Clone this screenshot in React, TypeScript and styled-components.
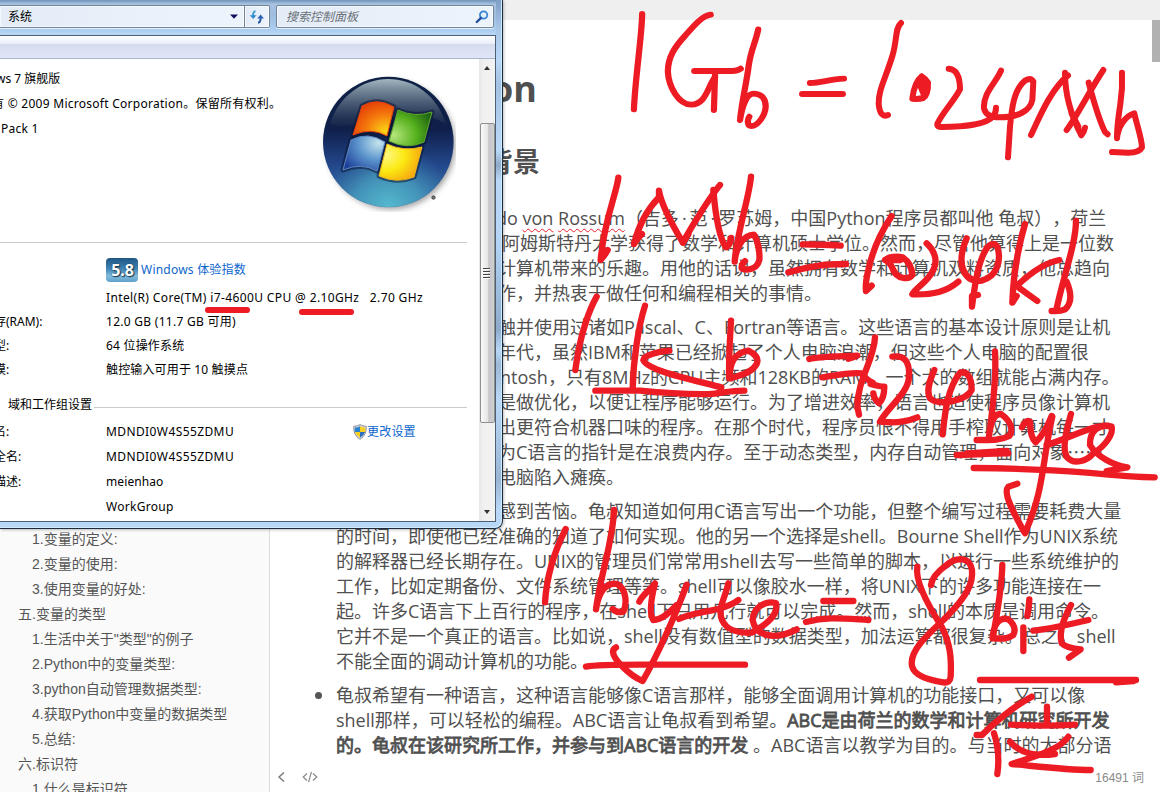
import React from "react";
import styled, { createGlobalStyle, css } from "styled-components";

const Global = createGlobalStyle`
  * { box-sizing: border-box; }
  html, body { margin: 0; padding: 0; overflow: hidden; background: #fff; }
`;

const Screen = styled.div`
  position: relative;
  display: flex;
  flex-direction: column;
  width: 1160px;
  height: 792px;
  overflow: hidden;
  background: #fff;
`;

/* ---------- editor ---------- */

const TopBar = styled.div`
  flex: 0 0 20px;
  background: #efefef;
`;

const Body = styled.div`
  flex: 1;
  min-height: 0;
  display: flex;
`;

const Sidebar = styled.aside`
  width: 270px;
  padding-top: 507px;
  overflow: hidden;
  background: #fafafa;
  border-right: 1px solid #dddddd;
  font: 14px/25px "Liberation Sans", "Noto Sans CJK SC", sans-serif;
  color: #555;
`;

const OutlineItem = styled.div<{ $level: number }>`
  height: 25px;
  padding-left: ${(p) => (p.$level === 1 ? 18 : 32)}px;
  white-space: nowrap;
`;

const Main = styled.main`
  flex: 1;
  min-width: 0;
  display: flex;
  flex-direction: column;
`;

const Document = styled.div`
  display: flex;
  height: 742px;
  overflow: hidden;
`;

const Article = styled.article`
  flex: 1;
  color: #505050;
  font: 18px/25px "Open Sans", "Noto Sans CJK SC", sans-serif;
  text-spacing-trim: space-all;
`;

const ScrollThumb = styled.div`
  width: 8px;
  height: 42px;
  background: #b1b1b1;
`;

const H1 = styled.h1`
  margin: 44px 0 0 221px;
  font-size: 36px;
  line-height: 50px;
  font-weight: 700;
`;

const H2 = styled.h2`
  margin: 30px 0 0 216px;
  font-size: 27px;
  line-height: 36px;
  font-weight: 700;
`;

const Para = styled.div<{ $gap: number }>`
  margin-top: ${(p) => p.$gap}px;
  padding-left: 66px;
  position: relative;
`;

const Line = styled.div<{ $shift?: number }>`
  height: 25px;
  margin-left: ${(p) => p.$shift ?? 0}px;
  white-space: nowrap;
`;

const Misspelt = styled.span`
  text-decoration: underline wavy #e8222c 1px;
  text-underline-offset: 3px;
`;

const NameDot = styled.span`
  padding: 0 3px;
`;

const Ellipsis = styled.span`
  font-family: "Noto Sans CJK SC", sans-serif;
  line-height: 1;
`;

const Strong = styled.strong`
  font-weight: 400;
  -webkit-text-stroke: 0.8px currentColor;
`;

const Bullet = styled.span`
  position: absolute;
  left: 45px;
  top: 9px;
  width: 7px;
  height: 7px;
  border-radius: 50%;
  background: #555;
`;

const Footer = styled.footer`
  flex: 1;
  display: flex;
  align-items: center;
  gap: 16px;
  padding: 0 16px 1px 7px;
  font: 12px "Liberation Sans", "Noto Sans CJK SC", sans-serif;
  color: #8a8a8a;
`;

const WordCount = styled.span`
  margin-left: auto;
`;

/* ---------- system window ---------- */

const Window = styled.section`
  position: absolute;
  left: 0;
  top: 0;
  width: 503px;
  height: 529px;
  display: flex;
  flex-direction: column;
  padding: 0 6px 6px 0;
  border: solid #1c2b3d;
  border-width: 0 1px 1px 0;
  border-radius: 0 0 8px 0;
  background: linear-gradient(180deg, #7f9fc3 0, #a9c8ea 30px, #b9d8f8 60px, #a3c2e4 85px, #bbd9f8 150px, #8fabc9 165px, #b9d8f8 180px, #b5d5f7 240px, #8eabcc 330px, #b9d8f8 350px, #9db9d6 365px, #b9d8f8 400px, #9ab6d4 480px, #b9d8f8 510px);
  box-shadow: inset -1px -1px 0 #cfeafd, 1px 1px 3px rgba(0, 0, 0, 0.25);
  font: 12px/16px "Noto Sans", "Noto Sans CJK SC", sans-serif;
  color: #000;
`;

const AddressRow = styled.div`
  flex: 0 0 35px;
  display: flex;
  align-items: flex-start;
  padding-top: 5px;
  background: linear-gradient(180deg, #6f93b8 0, #a7c3e0 4px, #9fbddd 14px, #abcdf1 30px, #b8d6f4 34px);
`;

const fieldLook = css`
  height: 23px;
  border: 1px solid #73859a;
  background: linear-gradient(90deg, #e3ecf7, #edf4fc);
  box-shadow: 0 1px 0 #e4f0fb, inset 0 0 0 1px rgba(255, 255, 255, 0.6);
`;

const Address = styled.div`
  ${fieldLook}
  width: 245px;
  border-left: 0;
  display: flex;
  align-items: center;
  justify-content: space-between;
  padding: 0 6px 0 8px;
`;

const Refresh = styled.div`
  ${fieldLook}
  width: 25px;
  border-left: 0;
  border-radius: 0 2px 2px 0;
  display: flex;
  align-items: center;
  justify-content: center;
`;

const Search = styled.div`
  ${fieldLook}
  width: 218px;
  margin-left: 6px;
  border-radius: 2px;
  display: flex;
  align-items: center;
  justify-content: space-between;
  padding: 0 4px 0 9px;
  font-style: italic;
  color: #6a6f76;
`;

const Client = styled.div`
  flex: 1;
  min-height: 0;
  display: flex;
  flex-direction: column;
  border: solid #4f5f73;
  border-width: 1px 1px 1px 0;
  background: #fff;
`;

const CommandBar = styled.div`
  flex: 0 0 23px;
  border-bottom: 1px solid #aab4cc;
  background: linear-gradient(180deg, #fdfeff 0, #e8eef8 8px, #d5dcee 8px, #e0e6f6 22px);
`;

const Pane = styled.div`
  flex: 1;
  min-height: 0;
  display: flex;
`;

const Details = styled.div`
  width: 479px;
  padding-top: 7px;
  overflow: hidden;
`;

const Edition = styled.div`
  display: flex;
  height: 176px;
`;

const EditionText = styled.div`
  width: 314px;
  line-height: 25px;
  white-space: nowrap;
`;

const EditionLine = styled.div<{ $x: number; $spacing?: number }>`
  height: 25px;
  margin-left: ${(p) => p.$x}px;
  letter-spacing: ${(p) => p.$spacing ?? 0}px;
`;

const Rule = styled.div<{ $drop?: number }>`
  flex: 1;
  height: 1px;
  margin: ${(p) => p.$drop ?? 0}px 12px 0 0;
  background: #cbcbcb;
`;

const Row = styled.div<{ $h: number; $gap?: number }>`
  display: flex;
  align-items: center;
  height: ${(p) => p.$h}px;
  margin-top: ${(p) => p.$gap ?? 0}px;
  white-space: pre;
`;

const Label = styled.div`
  width: 112px;
  margin-left: -6px;
`;

const Value = styled.div<{ $spacing?: number; $w?: number }>`
  width: ${(p) => (p.$w ? `${p.$w}px` : "auto")};
  letter-spacing: ${(p) => p.$spacing ?? 0}px;
`;

const Link = styled.span<{ $spacing?: number }>`
  display: inline-flex;
  align-items: center;
  letter-spacing: ${(p) => p.$spacing ?? 0}px;
  color: #0d66cc;
`;

const Score = styled.span`
  width: 32px;
  height: 24px;
  margin-right: 3px;
  border-radius: 4px;
  background: linear-gradient(180deg, #1e5683 0, #3f84b6 45%, #86bddd 75%, #5ba0cb 100%);
  color: #fff;
  font: bold 16px/25px "Noto Sans", sans-serif;
  letter-spacing: 0;
  text-align: right;
  padding-right: 4px;
  text-shadow: 1px 1px 1px #16384f, 0 0 2px #16384f;
`;

const GroupTitle = styled.div`
  margin: 0 2px 0 8px;
`;

const ScrollBar = styled.div`
  flex: 1;
  display: flex;
  flex-direction: column;
  align-items: center;
  background: linear-gradient(90deg, #e6e6e6, #f0f0f0 4px, #f2f2f2);
`;

const Arrow = styled.div<{ $down?: boolean }>`
  width: 0;
  height: 0;
  margin: ${(p) => (p.$down ? "auto 0 7px" : "7px 0 0")};
  border: 3.5px solid transparent;
  ${(p) => (p.$down ? "border-top: 4px solid #333; border-bottom: 0;" : "border-bottom: 4px solid #333; border-top: 0;")}
`;

const Thumb = styled.div`
  width: 15px;
  height: 300px;
  margin-top: 53px;
  display: flex;
  flex-direction: column;
  align-items: center;
  justify-content: center;
  gap: 2px;
  border: 1px solid #8f8f8f;
  border-radius: 2px;
  background: linear-gradient(90deg, #fafafa, #e6e6e8 50%, #c6c6ca 60%, #cfcfd2);
`;

const Grip = styled.i`
  width: 7px;
  height: 1px;
  margin-right: 1px;
  background: #444;
  box-shadow: 0 1px 0 #fff;
`;

const Ink = styled.svg`
  position: absolute;
  left: 0;
  top: 0;
  pointer-events: none;
  fill: none;
  stroke: #ed1c24;
  stroke-linecap: round;
  stroke-linejoin: round;
`;

const outline: [number, string][] = [
  [2, "1.变量的定义:"],
  [2, "2.变量的使用:"],
  [2, "3.使用变量的好处:"],
  [1, "五.变量的类型"],
  [2, "1.生活中关于\"类型\"的例子"],
  [2, "2.Python中的变量类型:"],
  [2, "3.python自动管理数据类型:"],
  [2, "4.获取Python中变量的数据类型"],
  [2, "5.总结:"],
  [1, "六.标识符"],
  [2, "1.什么是标识符"],
];

const languages = [
  "触并使用过诸如Pascal、C、Fortran等语言。这些语言的基本设计原则是让机",
  "年代，虽然IBM和苹果已经掀起了个人电脑浪潮，但这些个人电脑的配置很",
  "ntosh，只有8MHz的CPU主频和128KB的RAM，一个大的数组就能占满内存。",
  "是做优化，以便让程序能够运行。为了增进效率，语言也迫使程序员像计算机",
  "出更符合机器口味的程序。在那个时代，程序员恨不得用手榨取计算机每一寸",
];

const shellLines = [
  "的时间，即使他已经准确的知道了如何实现。他的另一个选择是shell。Bourne Shell作为UNIX系统",
  "的解释器已经长期存在。UNIX的管理员们常常用shell去写一些简单的脚本，以进行一些系统维护的",
  "工作，比如定期备份、文件系统管理等等。shell可以像胶水一样，将UNIX下的许多功能连接在一",
  "起。许多C语言下上百行的程序，在shell下只用几行就可以完成。然而，shell的本质是调用命令。",
  "它并不是一个真正的语言。比如说，shell没有数值型的数据类型，加法运算都很复杂。总之，shell",
  "不能全面的调动计算机的功能。",
];

const WindowsLogo = () => (
  <svg width="142" height="146" viewBox="0 0 142 146">
    <defs>
      <linearGradient id="orb" x1="0" y1="0" x2="0" y2="1">
        <stop offset="0" stopColor="#0e2245" />
        <stop offset="0.4" stopColor="#0f1f4a" />
        <stop offset="0.68" stopColor="#23478c" />
        <stop offset="1" stopColor="#3d7fae" />
      </linearGradient>
      <radialGradient id="glow" cx="0.5" cy="1" r="0.5">
        <stop offset="0" stopColor="#55b9cf" />
        <stop offset="0.5" stopColor="#4aa5c2" stopOpacity="0.7" />
        <stop offset="1" stopColor="#3a7fb0" stopOpacity="0" />
      </radialGradient>
      <linearGradient id="gloss" x1="0" y1="0" x2="0" y2="1">
        <stop offset="0" stopColor="#a3b6bf" />
        <stop offset="1" stopColor="#1a2c4c" stopOpacity="0.5" />
      </linearGradient>
      <radialGradient id="red" cx="0.8" cy="0.85" r="0.95">
        <stop offset="0" stopColor="#fbd616" />
        <stop offset="0.5" stopColor="#f57a0c" />
        <stop offset="1" stopColor="#e33a06" />
      </radialGradient>
      <radialGradient id="green" cx="0.1" cy="0.7" r="1">
        <stop offset="0" stopColor="#b6e67b" />
        <stop offset="0.55" stopColor="#55b01d" />
        <stop offset="1" stopColor="#1d6112" />
      </radialGradient>
      <radialGradient id="blue" cx="0.85" cy="0.2" r="1">
        <stop offset="0" stopColor="#c4e4ec" />
        <stop offset="0.5" stopColor="#5b94cc" />
        <stop offset="1" stopColor="#1c3f98" />
      </radialGradient>
      <radialGradient id="yellow" cx="0.15" cy="0.3" r="1">
        <stop offset="0" stopColor="#fdf884" />
        <stop offset="0.45" stopColor="#fbe912" />
        <stop offset="1" stopColor="#f5900e" />
      </radialGradient>
      <filter id="soft" x="-20%" y="-20%" width="140%" height="140%">
        <feGaussianBlur stdDeviation="3" />
      </filter>
    </defs>
    <circle cx="77" cy="79" r="64" fill="#000" opacity="0.4" filter="url(#soft)" />
    <circle cx="74.3" cy="76" r="65.3" fill="url(#orb)" />
    <circle cx="74.3" cy="76" r="65" fill="url(#glow)" />
    <path d="M16 58 C25 29 50 13 74 13 C100 13 123 29 132 58 C112 46 95 50 74 52 C55 54 36 64 16 58Z" fill="url(#gloss)" />
    <g stroke="#0a1634" strokeOpacity="0.55" strokeWidth="5" strokeLinejoin="round">
      <path d="M48 40 Q63 31 80 41 L73 70 Q57 61 39 69Z" />
      <path d="M84 44 Q101 52 118 46 L110 76 Q93 84 75 75Z" />
      <path d="M37 74 Q54 65 71 76 L63 105 Q47 96 29 104Z" />
      <path d="M73 78 Q90 86 108 81 L100 111 Q83 118 65 110Z" />
    </g>
    <path d="M48 40 Q63 31 80 41 L73 70 Q57 61 39 69Z" fill="url(#red)" stroke="#e8420b" />
    <path d="M84 44 Q101 52 118 46 L110 76 Q93 84 75 75Z" fill="url(#green)" stroke="#5fa92f" />
    <path d="M37 74 Q54 65 71 76 L63 105 Q47 96 29 104Z" fill="url(#blue)" stroke="#5f86c5" />
    <path d="M73 78 Q90 86 108 81 L100 111 Q83 118 65 110Z" fill="url(#yellow)" stroke="#f0b81c" />
    <circle cx="119.5" cy="131.5" r="1.7" fill="#777" stroke="#333" strokeWidth="0.8" />
  </svg>
);

const RefreshIcon = () => (
  <svg width="16" height="14" viewBox="0 0 16 14">
    <path d="M6.5 1.2 Q4 1.5 4 6" fill="none" stroke="#3f9bd6" strokeWidth="2" />
    <path d="M0.8 5.2 H7.6 L4.2 9Z" fill="#2f86c8" />
    <path d="M9 12.8 Q11.6 12.5 11.6 8" fill="none" stroke="#2757a8" strokeWidth="2" />
    <path d="M8.2 8.4 H15 L11.6 4.6Z" fill="#2f62b4" />
  </svg>
);

const SearchIcon = () => (
  <svg width="14" height="14" viewBox="0 0 14 14" fill="none">
    <circle cx="8.6" cy="5" r="3.7" stroke="#3b86d2" strokeWidth="1.8" fill="#e2f1fc" />
    <path d="M6 7.8 L1.8 12" stroke="#264f9e" strokeWidth="2.4" strokeLinecap="round" />
  </svg>
);

const Shield = () => (
  <svg width="14" height="16" viewBox="0 0 14 16">
    <path d="M7 .6 Q10 2.4 13.2 2.2 Q14 11 7 15.4 Q0 11 .8 2.2 Q4 2.4 7 .6Z" fill="#d9dde0" stroke="#84898d" strokeWidth="0.9" />
    <path d="M7 2.2 V8 H1.9 Q1.6 5.5 1.9 3.6 Q4.8 3.6 7 2.2Z" fill="#2b83cf" />
    <path d="M7 2.2 V8 H12.1 Q12.4 5.5 12.1 3.6 Q9.2 3.6 7 2.2Z" fill="#f6cf20" />
    <path d="M7 8 V13.8 Q3 11.2 1.9 8Z" fill="#f6cf20" />
    <path d="M7 8 V13.8 Q11 11.2 12.1 8Z" fill="#2b6fc0" />
  </svg>
);

/* Each pen group keeps the coordinate scale it was digitised at. */
const pen: { at: string; width: number; strokes: string[] }[] = [
  {
    at: "translate(600 0) scale(0.35714 0.33333)",
    width: 17.5,
    strokes: [
      "M118 42 C118 100 98 240 95 328",
      "M310 44 C285 48 262 78 240 105 C210 140 190 170 190 215 C192 260 220 313 255 314 C298 312 300 262 322 232",
      "M264 213 H370 Q385 213 394 206",
      "M322 225 L319 330",
      "M443 88 C435 130 422 150 416 200 C410 250 398 300 392 360 C398 320 410 281 430 281 C452 281 464 296 464 320 C462 350 440 378 424 378 C412 378 412 360 418 350",
      "M588 249 C620 249 640 238 683 236",
      "M566 282 H680",
    ],
  },
  {
    at: "translate(860 10) scale(0.33333)",
    width: 18,
    strokes: [
      "M123 39 C105 55 112 85 98 135 C75 210 55 240 56 282 Q60 325 84 315",
      "M185 199 C165 215 160 240 157 266 Q175 268 190 264 Q205 255 204 218 Q195 205 185 199 L180 225 L190 250 M192 215 V245",
      "M266 176 C292 178 300 205 300 238 C285 270 245 310 232 342 Q230 351 245 351 C310 350 380 345 400 318 Q408 308 408 293",
      "M423 182 C410 215 368 250 372 295 Q378 322 420 322 C470 322 510 305 517 270 L520 215 Q512 202 495 212 C460 240 455 300 450 350 L444 442",
      "M513 375 C535 330 570 240 624 196",
      "M615 188 C615 250 635 320 664 376 Q673 366 675 353",
      "M620 360 C650 320 690 240 730 180",
      "M686 218 C700 270 715 325 735 366 L743 373",
      "M635 310 L655 350",
      "M786 188 C789 250 782 270 777 310 C772 345 771 365 771 385 C774 350 795 318 823 310 C832 350 845 385 846 412 Q838 428 805 428 L756 426",
    ],
  },
  {
    at: "translate(480 160) scale(0.33333)",
    width: 19,
    strokes: [
      "M415 53 C410 100 372 180 362 300 Q375 285 383 270",
      "M486 222 Q476 230 462 252 C475 200 500 150 537 112 L537 92 C545 140 580 200 609 248 C625 215 690 110 720 75",
      "M609 248 L625 222",
      "M700 90 C705 150 715 230 738 262 Q750 258 753 234",
      "M813 50 C808 110 768 230 764 305 C768 260 790 225 822 224 C835 245 840 280 838 300 C830 330 800 332 785 325 Q785 310 795 303",
      "M350 410 C330 445 300 520 286 630",
      "M495 437 C475 500 460 600 458 685",
      "M568 572 C540 574 490 585 490 600 C500 630 620 655 724 682",
      "M346 692 H480 C560 700 630 703 690 702 C720 700 750 692 793 692",
      "M753 482 C750 540 745 600 748 655 C750 610 760 580 805 572 Q840 590 830 612 C815 640 780 645 752 655",
    ],
  },
  {
    at: "translate(800 160) scale(0.33333)",
    width: 19,
    strokes: [
      "M8 253 C50 254 90 254 122 257",
      "M-35 337 C20 322 60 312 138 312",
      "M275 168 C250 205 220 260 205 330 Q195 370 198 393 L215 377",
      "M255 300 C265 290 290 288 308 292 Q335 310 337 345 C325 362 290 355 280 330 Q270 305 255 300 L300 300",
      "M380 250 C402 270 415 300 400 330 C380 370 350 380 337 403 C400 405 440 395 475 365",
      "M500 235 C485 270 478 300 490 330 C500 355 520 365 545 362 C592 350 605 300 592 260 Q580 242 562 262 C535 300 525 370 516 440 V408 L534 405",
      "M675 192 C655 260 640 340 637 428 L650 408",
      "M778 300 C735 308 690 340 650 378 Q680 400 712 423",
      "M828 182 C828 250 790 350 770 445 M800 365 C815 400 815 430 795 448 Q780 455 755 453",
      "M28 597 C50 590 90 590 172 587 L145 596",
      "M66 652 C110 645 150 636 185 640 Q200 660 218 668",
      "M225 532 C222 600 172 660 172 740 L177 764",
      "M212 672 Q240 680 253 680 C253 710 245 722 237 730 Q222 718 220 700",
      "M277 590 C310 585 330 600 327 650 C325 700 265 740 240 785 C280 790 320 785 352 772",
      "M403 630 C385 670 380 695 390 715 C420 740 500 720 515 690 C515 650 500 632 480 638 C440 690 435 760 428 823",
    ],
  },
  {
    at: "translate(480 390) scale(0.33333)",
    width: 19,
    strokes: [
      "M257 417 C225 480 200 560 195 637",
      "M402 360 C400 450 360 560 348 658 C355 610 375 575 412 582 C442 600 440 645 430 665 Q410 670 398 657",
      "M478 635 C490 610 510 602 525 580 C515 620 505 670 520 690 C550 690 575 660 590 645 M620 584 C585 680 530 800 488 873 C455 860 372 790 408 772",
      "M597 687 C650 662 730 665 775 630",
      "M745 580 C735 625 712 655 726 690 C740 722 780 730 815 728 C868 700 895 670 888 640 C860 630 820 650 818 690 C825 735 880 755 950 718",
      "M318 830 Q350 824 480 824 H795",
    ],
  },
  {
    at: "translate(800 390) scale(0.33333)",
    width: 19,
    strokes: [
      "M585 -116 C590 -40 578 60 566 146 C572 90 585 70 603 72 C635 95 640 120 628 138 C600 152 570 150 530 150",
      "M470 195 C520 194 570 190 625 190 M500 190 L620 183",
      "M666 112 Q680 86 690 95 C690 120 692 142 707 157 Q735 130 755 78 M757 80 C725 220 735 290 675 430 C650 385 605 310 625 290 Q640 285 652 281",
      "M740 165 C790 150 850 120 895 110",
      "M813 72 C800 120 785 170 800 200 C820 225 860 215 880 190 C920 165 940 130 935 110 C900 100 868 120 870 165 C890 200 940 225 982 232 L920 243",
      "M521 234 C640 235 760 240 860 248 C940 256 1000 262 1064 262",
      "M352 530 C345 570 380 640 425 710 C450 760 455 800 452 860 Q450 880 430 877 C380 870 335 855 335 820 C335 770 400 720 440 680 C500 620 520 580 516 540 C510 500 470 500 440 525 C405 550 395 570 393 585",
      "M70 633 H160",
      "M18 696 C80 680 120 685 205 690",
      "M607 525 C605 600 590 680 578 745 C580 700 600 680 625 688 Q652 710 640 735 C620 750 600 745 578 745",
      "M670 783 V712 M688 628 Q688 650 682 678",
      "M813 645 C795 680 775 720 785 760 Q800 775 842 778 L807 803",
      "M700 722 C760 715 820 700 865 690",
      "M540 870 H1008 M948 877 L1000 873",
      "M695 920 C640 950 580 1000 546 1035 L530 1035",
      "M582 1030 C595 1070 598 1110 592 1152",
      "M741 950 V1000 M633 1004 C700 1008 760 1008 825 1004",
      "M630 1055 C660 1090 710 1100 765 1092",
      "M805 1040 C780 1080 700 1100 635 1122 C720 1130 800 1140 872 1140",
    ],
  },
  { at: "", width: 6, strokes: ["M208 310 H247", "M302 312 H351"] },
];

export default function App() {
  return (
    <Screen>
      <Global />
      <TopBar />
      <Body>
        <Sidebar>
          {outline.map(([level, text]) => (
            <OutlineItem key={text} $level={level}>{text}</OutlineItem>
          ))}
        </Sidebar>
        <Main>
          <Document>
            <Article>
              <H1>on</H1>
              <H2>背景</H2>
              <Para $gap={26}>
                <Line $shift={160}>
                  do <Misspelt>von</Misspelt> <Misspelt>Rossum</Misspelt>（吉多<NameDot>·</NameDot>范<NameDot>·</NameDot>罗苏姆，中国Python程序员都叫他 龟叔），荷兰
                </Line>
                <Line $shift={166}>阿姆斯特丹大学获得了数学和计算机硕士学位。然而，尽管他算得上是一位数</Line>
                <Line $shift={162}>计算机带来的乐趣。用他的话说，虽然拥有数学和计算机双料资质，他总趋向</Line>
                <Line $shift={162}>作，并热衷于做任何和编程相关的事情。</Line>
              </Para>
              <Para $gap={9}>
                {languages.map((t, i) => (
                  <Line key={t} $shift={i === 2 ? 164 : 162}>{t}</Line>
                ))}
                <Line $shift={162}>为C语言的指针是在浪费内存。至于动态类型，内存自动管理，面向对象<Ellipsis>……</Ellipsis></Line>
                <Line $shift={162}>电脑陷入瘫痪。</Line>
              </Para>
              <Para $gap={9}>
                <Line $shift={162}>感到苦恼。龟叔知道如何用C语言写出一个功能，但整个编写过程需要耗费大量</Line>
                {shellLines.map((t) => (
                  <Line key={t}>{t}</Line>
                ))}
              </Para>
              <Para $gap={9}>
                <Bullet />
                <Line>龟叔希望有一种语言，这种语言能够像C语言那样，能够全面调用计算机的功能接口，又可以像</Line>
                <Line>shell那样，可以轻松的编程。ABC语言让龟叔看到希望。<Strong>ABC是由荷兰的数学和计算机研究所开发</Strong></Line>
                <Line><Strong>的。龟叔在该研究所工作，并参与到ABC语言的开发</Strong> 。ABC语言以教学为目的。与当时的大部分语</Line>
              </Para>
            </Article>
            <ScrollThumb />
          </Document>
          <Footer>
            <svg width="9" height="12" viewBox="0 0 9 12" fill="none" stroke="#777" strokeWidth="1.4"><path d="M7 1.5 L2 6 L7 10.5" /></svg>
            <svg width="16" height="12" viewBox="0 0 16 12" fill="none" stroke="#888" strokeWidth="1.2"><path d="M5 2.5 L1.2 6 L5 9.5 M11 2.5 L14.8 6 L11 9.5 M9.4 .8 L6.6 11.2" /></svg>
            <WordCount>16491 词</WordCount>
          </Footer>
        </Main>
      </Body>

      <Window>
        <AddressRow>
          <Address>
            系统
            <svg width="8" height="5" viewBox="0 0 8 5"><path d="M0 .5 H8 L4 4.8Z" fill="#10105a" /></svg>
          </Address>
          <Refresh><RefreshIcon /></Refresh>
          <Search>搜索控制面板<SearchIcon /></Search>
        </AddressRow>
        <Client>
          <CommandBar />
          <Pane>
            <Details>
              <Edition>
                <EditionText>
                  <EditionLine $x={-4}>ws 7 旗舰版</EditionLine>
                  <EditionLine $x={-8} $spacing={0.27}>有 © 2009 Microsoft Corporation。保留所有权利。</EditionLine>
                  <EditionLine $x={1} $spacing={0.25}>Pack 1</EditionLine>
                </EditionText>
                <WindowsLogo />
              </Edition>
              <Row $h={1}><Rule /></Row>
              <Row $h={26} $gap={14}>
                <Label />
                <Link $spacing={0.22}><Score>5.8</Score>Windows 体验指数</Link>
              </Row>
              <Row $h={24} $gap={3}><Label /><Value $spacing={0.37}>Intel(R) Core(TM) i7-4600U CPU @ 2.10GHz   2.70 GHz</Value></Row>
              <Row $h={24}><Label>存(RAM):</Label><Value $spacing={0.28}>12.0 GB (11.7 GB 可用)</Value></Row>
              <Row $h={24}><Label>型:</Label><Value $spacing={0.2}>64 位操作系统</Value></Row>
              <Row $h={24}><Label>摸:</Label><Value $spacing={0.15}>触控输入可用于 10 触摸点</Value></Row>
              <Row $h={28} $gap={9}><GroupTitle>域和工作组设置</GroupTitle><Rule $drop={4} /></Row>
              <Row $h={25}>
                <Label>名:</Label>
                <Value $spacing={0.4} $w={247}>MDNDI0W4S55ZDMU</Value>
                <Link $spacing={0.2}><Shield />更改设置</Link>
              </Row>
              <Row $h={25}><Label>全名:</Label><Value $spacing={0.4}>MDNDI0W4S55ZDMU</Value></Row>
              <Row $h={25}><Label>描述:</Label><Value $spacing={0.1}>meienhao</Value></Row>
              <Row $h={25}><Label /><Value $spacing={0.3}>WorkGroup</Value></Row>
            </Details>
            <ScrollBar>
              <Arrow />
              <Thumb><Grip /><Grip /><Grip /><Grip /></Thumb>
              <Arrow $down />
            </ScrollBar>
          </Pane>
        </Client>
      </Window>

      <Ink width="1160" height="792" viewBox="0 0 1160 792">
        {pen.map((g) => (
          <g key={g.at} transform={g.at || undefined} strokeWidth={g.width}>
            {g.strokes.map((d) => <path key={d} d={d} />)}
          </g>
        ))}
      </Ink>
    </Screen>
  );
}
